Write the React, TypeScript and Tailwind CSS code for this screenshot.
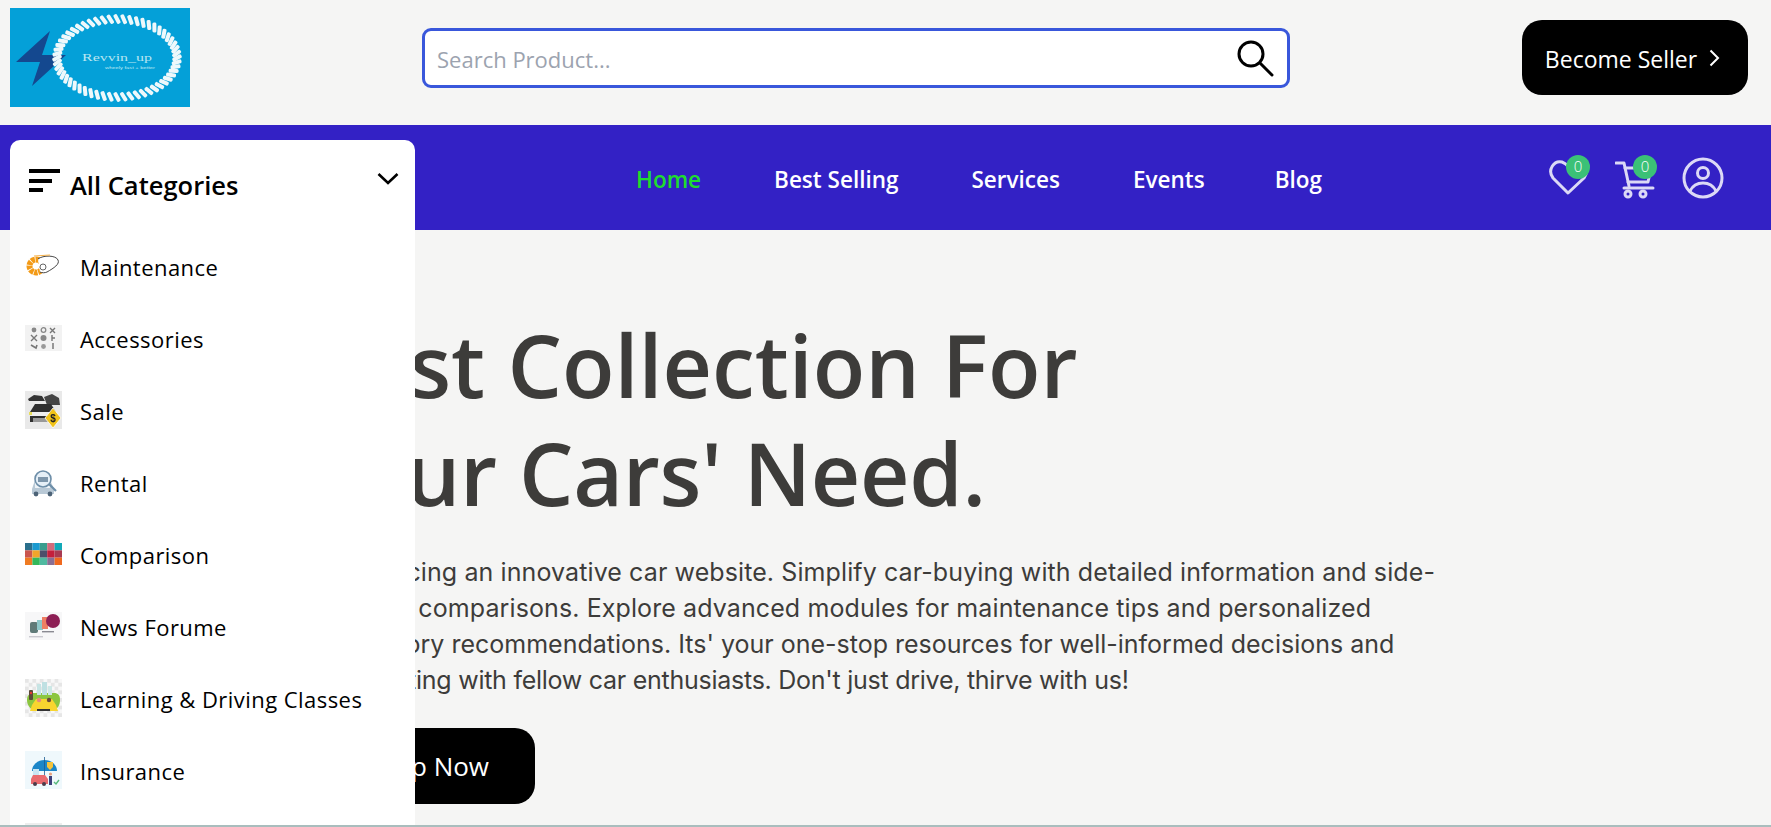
import React from "react";

const sans = "[font-family:'Open_Sans','Noto_Sans',sans-serif]";

function Logo() {
  const beads = Array.from({ length: 56 }, (_, i) => {
    const a = (i / 56) * Math.PI * 2;
    const x = 107 + 60 * Math.cos(a);
    const y = 50 + 39 * Math.sin(a);
    const deg = (Math.atan2(39 * Math.cos(a), -60 * Math.sin(a)) * 180) / Math.PI + 62;
    return <rect key={i} x={-5} y={-2} width={10} height={4} rx={1.5} fill="#eef8fb" transform={`translate(${x} ${y}) rotate(${deg})`} />;
  });
  return (
    <svg width="180" height="99" viewBox="0 0 180 99" className="block shrink-0">
      <rect width="180" height="99" fill="#04a0d8" />
      <polygon points="40,23 6,54 30,54 22,78 56,47 32,47" fill="#14488f" />
      {beads}
      <text x="72" y="53" fontSize="10" fill="#b9e6f1" fontFamily="'Liberation Serif', serif" textLength="70" lengthAdjust="spacingAndGlyphs">Revvin_up</text>
      <text x="95" y="60.5" fontSize="3" fill="#bfe8f3" fontFamily="'Liberation Sans', sans-serif" textLength="50" lengthAdjust="spacingAndGlyphs">wheely fast + better</text>
    </svg>
  );
}

function SearchIcon() {
  return (
    <svg width="38" height="38" viewBox="0 0 38 38" fill="none" stroke="#000" strokeWidth="3" strokeLinecap="round" className="mr-[-2px] shrink-0">
      <circle cx="15" cy="15" r="12" />
      <path d="M24 24l12 12" />
    </svg>
  );
}

function HeartIcon() {
  return (
    <div className="relative h-[36px] w-[42px] shrink-0">
      <svg width="42" height="40" viewBox="0 0 42 40" fill="none" stroke="#dcd9f6" strokeWidth="3" strokeLinejoin="round" className="absolute left-0 top-[-2px]">
        <path d="M20 35L5 20C-1 12 6 2 14 4c3 1 5 3 7 5 3-3 7-6 11-4 7 3 8 10 4 15z" />
      </svg>
      <span className="absolute left-[18px] top-[-5px] flex h-[24px] w-[24px] items-center justify-center rounded-full bg-[#3bc177] text-[15px] font-light leading-none text-white">0</span>
    </div>
  );
}

function CartIcon() {
  return (
    <div className="relative h-[36px] w-[42px] shrink-0">
      <svg width="42" height="40" viewBox="0 0 42 40" fill="none" stroke="#dcd9f6" strokeWidth="3" strokeLinecap="round" strokeLinejoin="round" className="absolute left-0 top-0">
        <path d="M1 3h8l5 23" />
        <path d="M10 8h26l-3 14H13" />
        <path d="M9 28h29" />
        <circle cx="13" cy="34" r="3" />
        <circle cx="28" cy="34" r="3" />
      </svg>
      <span className="absolute left-[18px] top-[-5px] flex h-[24px] w-[24px] items-center justify-center rounded-full bg-[#3bc177] text-[15px] font-light leading-none text-white">0</span>
    </div>
  );
}

function UserIcon() {
  return (
    <svg width="42" height="42" viewBox="0 0 42 42" fill="none" stroke="#dcd9f6" strokeWidth="3">
      <circle cx="21" cy="21" r="19" />
      <circle cx="21" cy="16" r="5.5" />
      <path d="M8 34c3-6 8-8 13-8s10 2 13 8" />
    </svg>
  );
}

function Thumb({ children, bg }: { children: React.ReactNode; bg?: string }) {
  return (
    <svg width="37" height="38" viewBox="0 0 37 38" className="shrink-0 blur-[0.3px]">
      {bg && <rect width="37" height="38" fill={bg} />}
      {children}
    </svg>
  );
}

const comparisonColors = [
  ["#2b6f8c", "#1b9ad0", "#3a9c8d", "#d36a7a", "#12a9b8"],
  ["#c9564f", "#f1a52b", "#4b4f6b", "#c41f3c", "#a83a52"],
  ["#ef7b22", "#34b85a", "#4fb9a0", "#8a6f94", "#f0691f"],
];

const checker = Array.from({ length: 10 }, (_, r) =>
  Array.from({ length: 10 }, (_, c) =>
    (r + c) % 2 === 0 ? <rect key={`${r}-${c}`} x={c * 3.7} y={r * 3.8} width="3.7" height="3.8" fill="#e6e6e6" /> : null
  )
);

const thumbs: React.ReactNode[] = [
  <Thumb key="m">
    <g fill="none">
      <circle cx="11" cy="19" r="6.500" stroke="#f39a16" strokeWidth="6" strokeDasharray="3.500 0.700" />
      <path d="M13 12C18 8 31 8 33 13c2 4-4 8-11 12-2 1-5 1-7 0" fill="#fff" stroke="#333" strokeWidth="0.9" />
      <path d="M9 9l16-1" stroke="#f7b24a" strokeWidth="1.2" />
      <circle cx="18" cy="20" r="3" stroke="#666" strokeWidth="1" />
    </g>
  </Thumb>,
  <svg key="a" width="37" height="26" viewBox="0 0 37 26" className="shrink-0 blur-[0.3px]">
    <rect width="37" height="26" fill="#f2f2f2" />
    <circle cx="9" cy="5" r="2.4" fill="#888" />
    <circle cx="18.500" cy="5" r="2.300" fill="none" stroke="#888" strokeWidth="1.300" />
    <path d="M25 3l5 5M30 3l-5 5" stroke="#777" strokeWidth="1.400" />
    <path d="M6 10l6 6M12 10l-6 6" stroke="#777" strokeWidth="1.400" />
    <circle cx="18.500" cy="13" r="3" fill="#888" />
    <path d="M27 10v6M27 13h3" stroke="#777" strokeWidth="1.400" />
    <path d="M6 20l5 3 1-3" stroke="#777" strokeWidth="1.600" fill="none" />
    <circle cx="18.500" cy="21.500" r="2.400" fill="#999" />
    <path d="M28 18v6" stroke="#777" strokeWidth="1.500" />
  </svg>,
  <Thumb key="s" bg="#e9e9e9">
    <path d="M3 8l6-4 8 1 3 5H4z" fill="#333" />
    <path d="M19 6l8-3 7 4 1 7H22z" fill="#444" />
    <path d="M5 21l5-8h16l5 8v10H5z" fill="#2f2f2f" />
    <rect x="5" y="21" width="22" height="4" fill="#eee" />
    <rect x="8" y="27" width="17" height="4" fill="#999" />
    <rect x="4" y="21" width="3" height="3" fill="#e8dd5b" />
    <polygon points="28,17 36,27 28,37 20,27" fill="#f1c319" stroke="#fff" strokeWidth="0.8" />
    <text x="28" y="31" fontSize="10" fontWeight="700" textAnchor="middle" fill="#222" fontFamily="'Liberation Sans', sans-serif">$</text>
  </Thumb>,
  <Thumb key="r">
    <path d="M7 26l3-9h15l4 9v5H7z" fill="#b9c9d6" />
    <rect x="10" y="19" width="15" height="6" fill="#eef3f7" />
    <circle cx="18" cy="16" r="8" fill="#e5eff7" stroke="#6d8ea8" strokeWidth="1.6" />
    <path d="M24 21l7 7" stroke="#6d8ea8" strokeWidth="2.2" />
    <rect x="13" y="14" width="10" height="5" fill="#7d96ab" />
    <circle cx="11" cy="31" r="2.4" fill="#4d6377" />
    <circle cx="25" cy="31" r="2.4" fill="#4d6377" />
  </Thumb>,
  <svg key="c" width="37" height="22" viewBox="0 0 37 22" className="shrink-0">
    {comparisonColors.map((row, r) => row.map((col, c) => (
      <rect key={`${r}${c}`} x={c * 7.4} y={r * 7.33} width="7.4" height="7.33" fill={col} />
    )))}
  </svg>,
  <svg key="n" width="37" height="28" viewBox="0 0 37 28" className="shrink-0 blur-[0.3px]">
    <rect width="37" height="28" fill="#f7f7f8" />
    <rect x="5" y="10" width="8" height="11" rx="2" fill="#5f7a78" />
    <rect x="12" y="8" width="6" height="10" fill="#8dc7c9" />
    <rect x="17" y="5" width="6" height="12" fill="#ee7f64" />
    <circle cx="28" cy="9" r="7" fill="#8d1f55" />
    <rect x="4" y="24" width="14" height="1.4" fill="#c9c9cf" />
    <rect x="17" y="19" width="12" height="1.4" fill="#8a8a92" />
  </svg>,
  <Thumb key="l" bg="#f8f8f8">
    {checker}
    <path d="M2 21c0-5 3-7 7-7h20c4 0 6 2 6 7s-2 9-7 10H9c-4-1-7-5-7-10z" fill="#8cc63f" />
    <rect x="12" y="5" width="4" height="11" fill="#c7e4e4" />
    <rect x="17" y="3" width="5" height="13" fill="#bfe0e2" />
    <rect x="23" y="7" width="4" height="9" fill="#cde8e6" />
    <path d="M7 26l4-6h16l4 6 2 6H5z" fill="#f8d52f" />
    <rect x="12" y="30" width="13" height="2" fill="#333" />
    <rect x="4" y="11" width="4" height="10" rx="1" fill="#5a4a3a" />
    <circle cx="6" cy="14" r="1.200" fill="#e53935" />
    <circle cx="14" cy="21" r="2.200" fill="#e98a7a" />
    <circle cx="24" cy="21" r="2.200" fill="#6a4a3a" />
  </Thumb>,
  <Thumb key="i" bg="#eff8fc">
    <path d="M7 20a12.500 11 0 0 1 25 0z" fill="#1c86c8" />
    <path d="M19.500 6v22" stroke="#1c5d92" strokeWidth="0.8" />
    <rect x="8" y="18" width="6" height="6" fill="#c9e5f3" />
    <path d="M6 28l2-4h12l3 4v5H6z" fill="#e96a6f" />
    <circle cx="10" cy="33" r="2" fill="#4a3b4a" />
    <circle cx="19" cy="33" r="2" fill="#4a3b4a" />
    <path d="M22 11h6v5l-3 3-3-3z" fill="#f5c33b" />
    <rect x="24" y="25" width="3" height="9" fill="#3b3f7a" />
    <circle cx="25.500" cy="23" r="1.600" fill="#e9a27f" />
    <path d="M29 31l2 2 3-4" stroke="#55b87a" strokeWidth="1.400" fill="none" />
  </Thumb>,
];

const categories = ["Maintenance", "Accessories", "Sale", "Rental", "Comparison", "News Forume", "Learning & Driving Classes", "Insurance"];

function Sidebar() {
  return (
    <aside className="absolute left-[10px] top-[15px] z-10 h-[685px] w-[405px] overflow-hidden rounded-t-[10px] bg-white text-black">
      <div className="flex h-[90px] items-start pt-[29px]">
        <svg width="31" height="23" viewBox="0 0 31 23" className="ml-[19px] shrink-0">
          <rect x="0" y="0" width="31" height="4" fill="#000" />
          <rect x="0" y="10" width="23" height="4" fill="#000" />
          <rect x="0" y="19" width="14" height="4" fill="#000" />
        </svg>
        <span className="ml-[10px] mt-[-7px] text-[25.500px] font-semibold leading-[46px]">All Categories</span>
        <svg width="22" height="14" viewBox="0 0 22 14" fill="none" stroke="#000" strokeWidth="2.600" className="ml-auto mr-[16px] mt-[3px]">
          <path d="M1.500 2l9.500 9 9.500-9" />
        </svg>
      </div>
      <ul>
        {categories.map((c, i) => (
          <li key={c} className="flex h-[72px] items-center">
            <span className="flex w-[70px] shrink-0 justify-start pl-[15px]">{thumbs[i]}</span>
            <span className="mt-[2px] text-[22px] leading-none tracking-[0.45px]">{c}</span>
          </li>
        ))}
        <li className="ml-[15px] mt-[17px] h-[2px] w-[37px] bg-[#eeeeee]" />
      </ul>
    </aside>
  );
}

export default function App() {
  const links = ["Home", "Best Selling", "Services", "Events", "Blog"];
  return (
    <div className={`flex h-[827px] flex-col overflow-hidden bg-[#f5f5f4] ${sans}`}>
      <header className="flex h-[125px] shrink-0 items-start">
        <div className="ml-[10px] mt-[8px]"><Logo /></div>
        <div className="ml-[232px] mt-[28px] flex h-[60px] w-[868px] items-center rounded-[9px] border-[3px] border-[#3957db] bg-white pl-[12px] pr-[15px]">
          <input readOnly placeholder="Search Product..." className="min-w-0 flex-1 bg-transparent pt-[2px] text-[22px] outline-none placeholder:text-[#9ca3af]" />
          <SearchIcon />
        </div>
        <button className="ml-[232px] mt-[20px] flex h-[75px] w-[226px] items-center justify-center gap-[12px] rounded-[20px] bg-black pr-[5px] pt-[3px] text-[23px] text-white">
          Become Seller
          <svg width="11" height="18" viewBox="0 0 11 18" fill="none" stroke="#fff" strokeWidth="2" className="mt-[-3px]"><path d="M1.500 1.500l7.500 7.500-7.500 7.500" /></svg>
        </button>
      </header>

      <nav className="relative flex h-[105px] shrink-0 items-center bg-[#3321c5]">
        <Sidebar />
        <ul className="ml-[636px] mt-[4px] flex gap-[73px] text-[22.500px] font-semibold text-white">
          <li className="text-[#1fdc2f]">{links[0]}</li>
          <li>{links[1]}</li>
          <li>{links[2]}</li>
          <li>{links[3]}</li>
          <li className="ml-[-3px]">{links[4]}</li>
        </ul>
        <div className="ml-auto mr-[47px] flex items-center gap-[25px]">
          <HeartIcon />
          <CartIcon />
          <UserIcon />
        </div>
      </nav>

      <main className="min-h-0 flex-1 overflow-hidden pl-[236px] pt-[81px] text-[#3d3c3a]">
        <h1 className="ml-[67px] whitespace-nowrap text-[86px] font-semibold leading-[108px]">
          Best Collection For
          <br />
          <span className="tracking-[-0.3px]">Your Cars' Need.</span>
        </h1>
        <p className="ml-[86px] mt-[27px] whitespace-nowrap font-['Inter',sans-serif] text-[25px] leading-[36px] tracking-[0.1px] text-[#3d3c3a]">
          Introducing an innovative car website. Simplify car-buying with detailed information and side-
          <br />
          by-side comparisons. Explore advanced modules for maintenance tips and personalized
          <br />
          <span className="tracking-[0px]">accessory recommendations. Its' your one-stop resources for well-informed decisions and</span>
          <br />
          <span className="tracking-[-0.26px]">connecting with fellow car enthusiasts. Don't just drive, thirve with us!</span>
        </p>
        <button className="mt-[30px] flex h-[76px] w-[299px] items-center justify-end rounded-[20px] bg-black pr-[46px] text-[26px] text-white">Shop Now</button>
      </main>
      <div className="h-[2px] shrink-0 bg-[#a9bdbd]" />
    </div>
  );
}
